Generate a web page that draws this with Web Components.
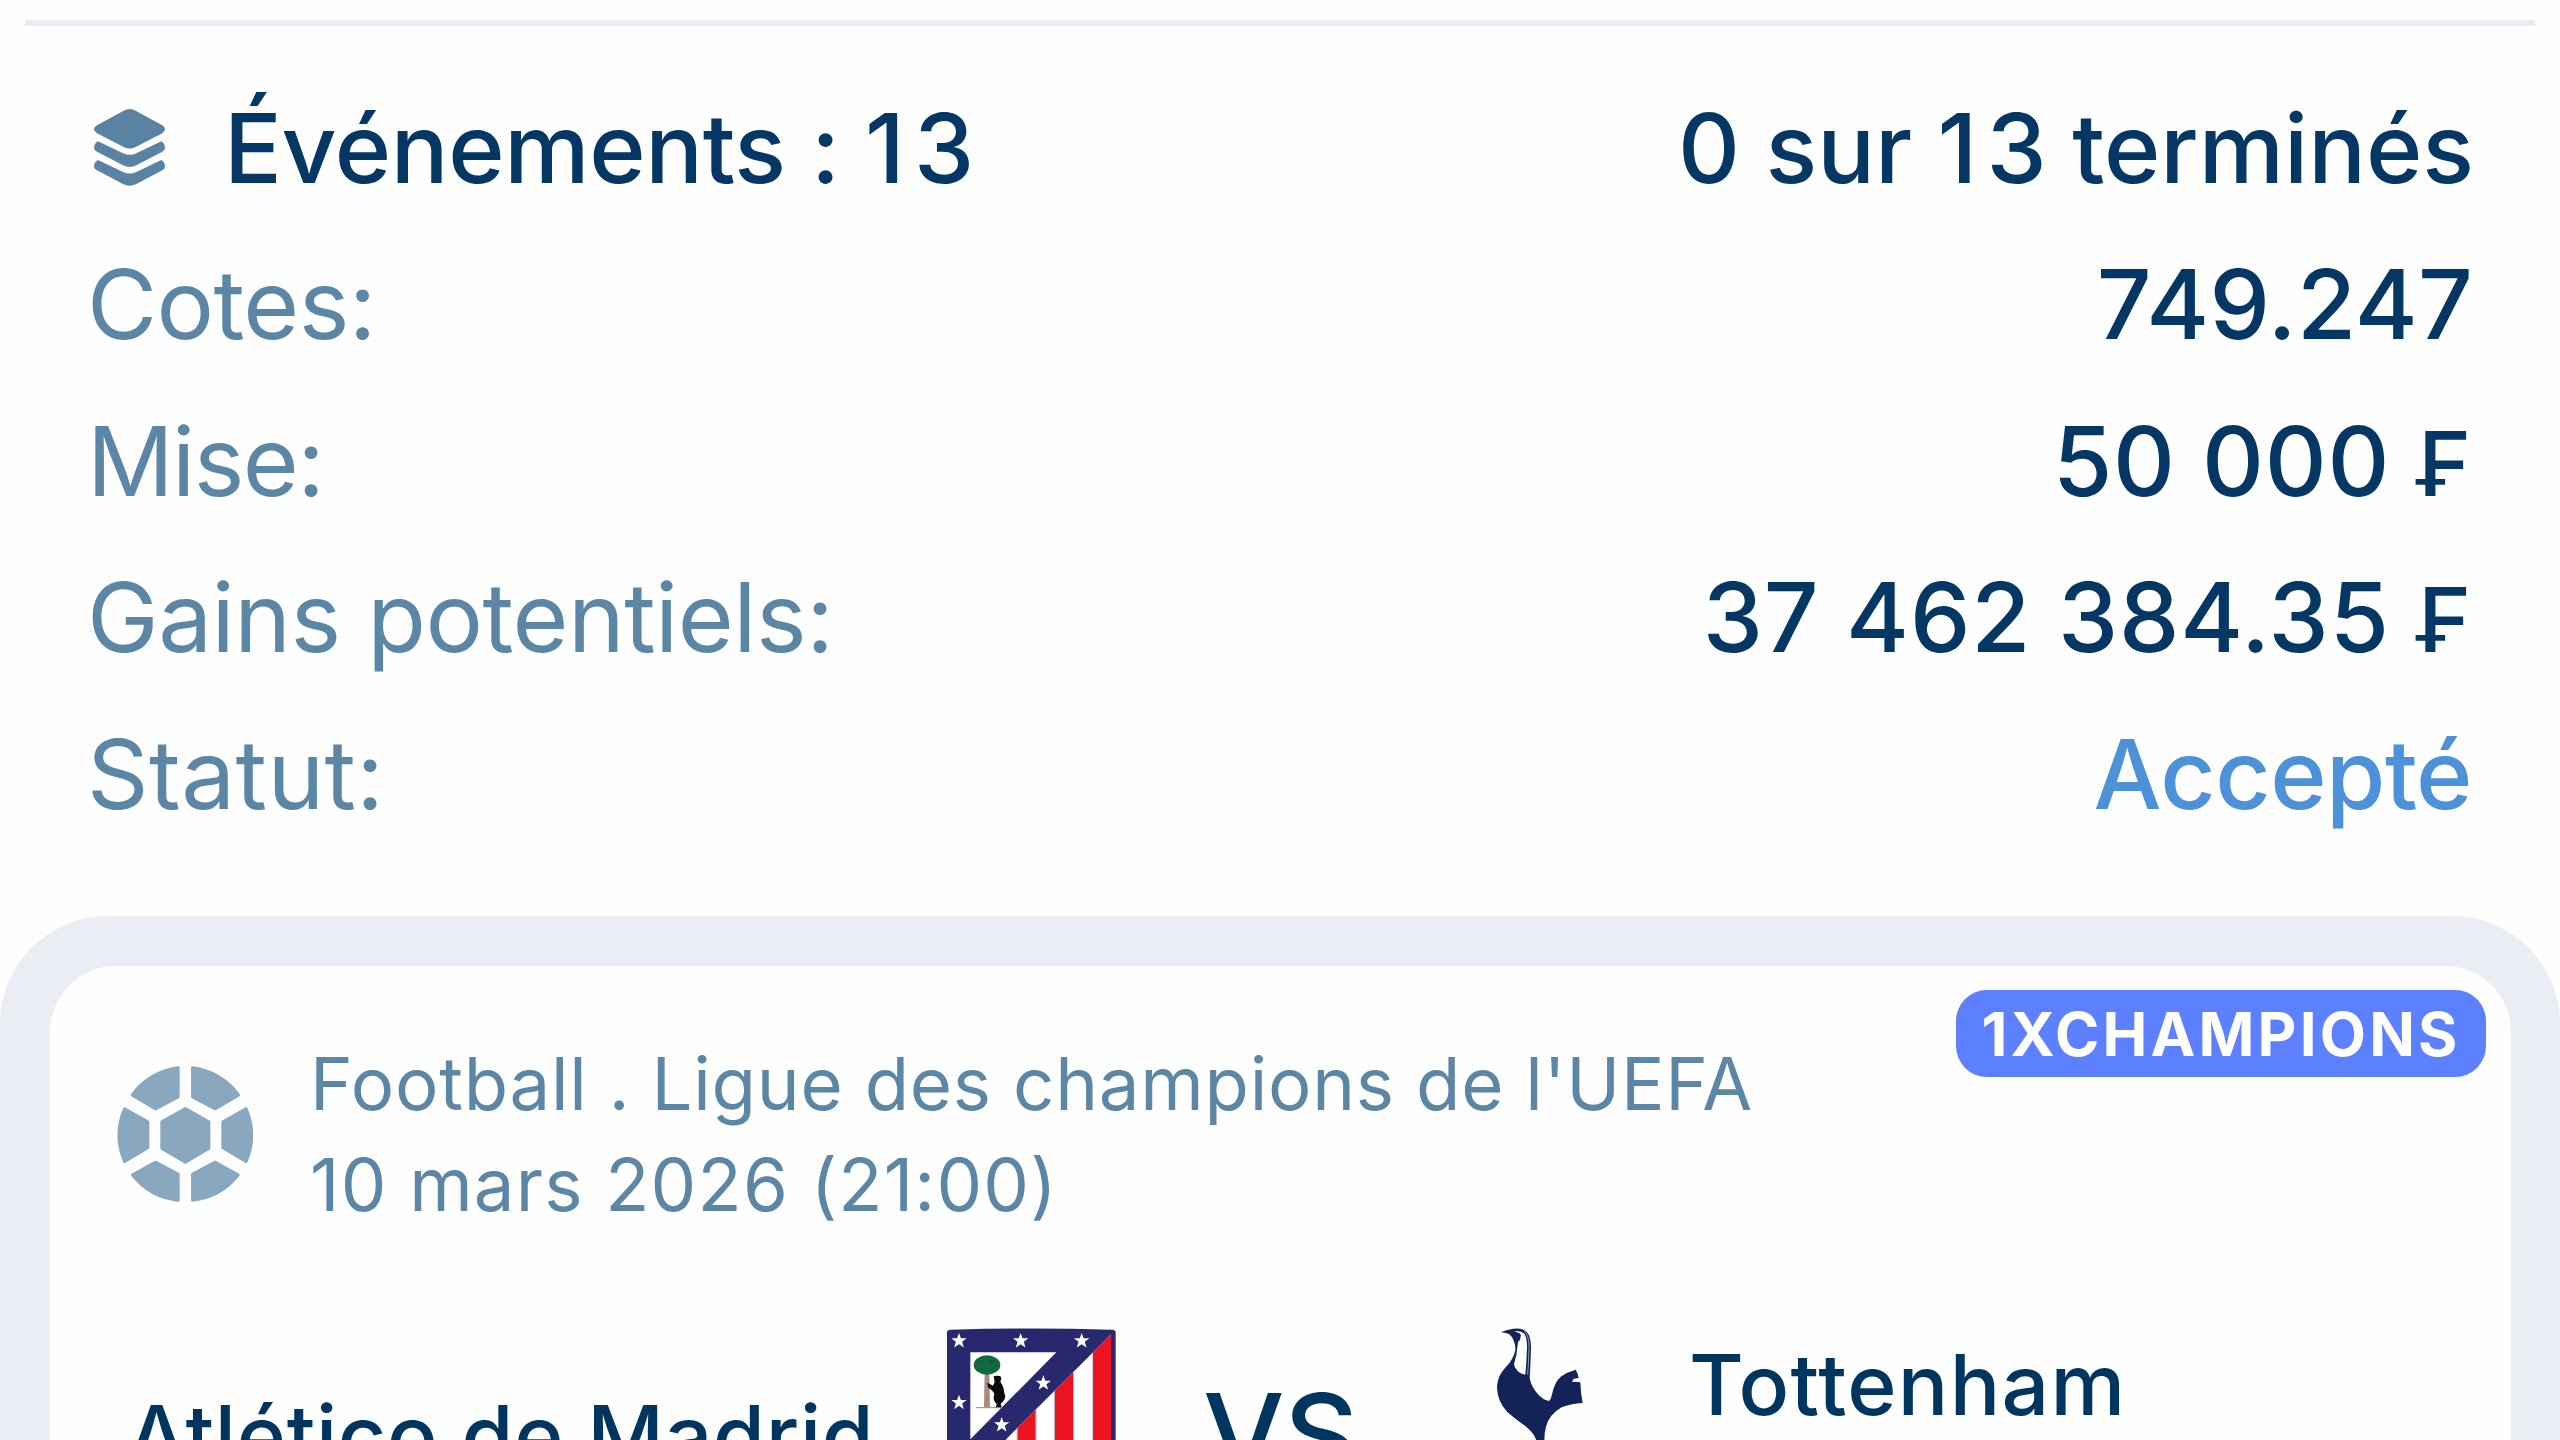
<!DOCTYPE html>
<html lang="fr">
<head>
<meta charset="utf-8">
<title>Coupon</title>
<style>
  html, body {
    margin: 0;
    height: 1440px;
    overflow: hidden;
  }

  body {
    background: #fefefe;
    color: #043764;
    font-family: Inter, "Liberation Sans", sans-serif;
    --muted: #5b86a5;
    --line: #e8ecf4;
    --frame: #eaedf3;
    --accent: #4d92d8;
    --badge: #5c80ff;
  }

  .count {
    letter-spacing: 9px;
    margin-right: -9px;
  }
</style>
</head>
<body>

<bet-slip>
  <slip-row strong style="--ls:-.3px; --vls:0px">
    <layers-icon slot="icon"></layers-icon>
    Événements : <span class="count">13</span>
    <span slot="value">0 sur <span class="count">13</span> terminés</span>
  </slip-row>
  <slip-row style="--ls:-.6px; --vls:.2px; --end:1px">
    Cotes:
    <span slot="value">749.247</span>
  </slip-row>
  <slip-row style="--ls:-1.6px; --vls:.7px; --end:3px">
    Mise:
    <span slot="value">50 000 <franc-sign></franc-sign></span>
  </slip-row>
  <slip-row style="--ls:-.5px; --vls:.9px; --end:3px">
    Gains potentiels:
    <span slot="value">37 462 384.35 <franc-sign></franc-sign></span>
  </slip-row>
  <slip-row accent style="--ls:.4px; --vls:-.5px; --end:2px">
    Statut:
    <span slot="value">Accepté</span>
  </slip-row>

  <match-card slot="events" badge="1XCHAMPIONS">
    <span slot="league">Football . Ligue des champions de l'UEFA</span>
    <span slot="date">10 mars 2026 (21:00)</span>
    <span slot="home">Atlético de Madrid</span>
    <atletico-crest slot="home-logo"></atletico-crest>
    <tottenham-crest slot="away-logo"></tottenham-crest>
    <span slot="away">Tottenham</span>
  </match-card>
</bet-slip>

<script>
class BaseElement extends HTMLElement {
  constructor(){
    super();
    this.attachShadow({ mode:"open" });
  }

  connectedCallback(){
    this.shadowRoot.innerHTML = this.render();
  }
}

class BetSlip extends BaseElement {
  render(){
    return `
      <style>
        :host{
          display:flex;
          flex-direction:column;
          width:2560px;
          height:1440px;
          box-sizing:border-box;
          padding-top:20px;
          overflow:hidden;
        }

        hr{
          flex:none;
          width:2510px;
          height:6px;
          margin:0 auto 43.4px;
          border:0;
          background:var(--line);
        }

        .rows{
          flex:none;
          display:grid;
          grid-auto-rows:156.5px;
          height:847px;
          padding:0 86px 0 87px;
          box-sizing:border-box;
        }
      </style>
      <hr>
      <div class="rows"><slot></slot></div>
      <slot name="events"></slot>
    `;
  }
}

class SlipRow extends BaseElement {
  render(){
    return `
      <style>
        :host{
          display:flex;
          align-items:center;
          justify-content:space-between;
          font-size:96px;
          line-height:156px;
          white-space:nowrap;
        }

        .label{
          display:flex;
          align-items:center;
          color:var(--muted);
          font-weight:420;
          letter-spacing:var(--ls, 0);
        }

        .value{
          font-weight:550;
          letter-spacing:var(--vls, 0);
          padding-right:var(--end, 0);
        }

        :host([strong]) .label{
          color:inherit;
          font-weight:550;
        }

        :host([accent]) .value{
          color:var(--accent);
          font-weight:470;
        }
      </style>
      <div class="label"><slot name="icon"></slot><span><slot></slot></span></div>
      <div class="value"><slot name="value"></slot></div>
    `;
  }
}

class FrancSign extends BaseElement {
  render(){
    return `
      <style>
        :host{
          display:inline;
          font-size:90px;
          line-height:0;
          letter-spacing:0;
        }
      </style>₣`;
  }
}

class LayersIcon extends BaseElement {
  render(){
    return `
      <style>
        :host{
          display:block;
          width:71px;
          height:77px;
          margin:0 59px 0 7px;
        }
        svg{ display:block; width:100%; height:100%; }
      </style>
      <svg viewBox="103 86 213 231" fill="#5a83a3">
        <path d="M192 91Q210 81 228 91L308 135Q316 140 316 147Q316 154 308 159L228 200Q210 209 192 200L112 159Q103 154 103 147Q103 140 112 135Z"/>
        <path d="M103 203Q103 190 115 183L190 219Q210 228 230 219L305 183Q316 190 316 203Q316 209 308 214L230 255Q210 265 190 255L112 214Q103 209 103 203Z"/>
        <path d="M103 259Q103 246 115 239L190 275Q210 284 230 275L305 239Q316 246 316 259Q316 265 308 270L230 311Q210 321 190 311L112 270Q103 265 103 259Z"/>
      </svg>
    `;
  }
}

class BallIcon extends BaseElement {
  render(){
    // left half is drawn once and mirrored
    return `
      <style>
        :host{
          display:block;
          flex:none;
          width:137px;
          height:136px;
        }
        svg{ display:block; width:100%; height:100%; }
      </style>
      <svg viewBox="81 80 411 408" fill="#89a7be" stroke="#89a7be" stroke-width="10" stroke-linejoin="round">
        <defs>
          <g id="half">
            <path d="M264 86V172L196 208L127 167A200 200 0 0 1 264 86Z"/>
            <path d="M104 209L173 248V325L104 366A200 200 0 0 1 104 209Z"/>
            <path d="M264 482V405L196 369L128 407A200 200 0 0 0 264 482Z"/>
          </g>
        </defs>
        <path d="M286 208L356 248V327L286 368L216 327V248Z"/>
        <use href="#half"/>
        <use href="#half" transform="translate(572) scale(-1 1)"/>
      </svg>
    `;
  }
}

class EventBadge extends BaseElement {
  render(){
    return `
      <style>
        :host{
          display:block;
          box-sizing:border-box;
          width:530px;
          height:87px;
          padding-left:26px;
          border-radius:31px;
          background:var(--badge);
          color:#fff;
          font-size:60px;
          font-weight:670;
          line-height:89px;
          letter-spacing:3.2px;
          white-space:nowrap;
        }
      </style>
      <slot></slot>
    `;
  }
}

class MatchCard extends BaseElement {
  render(){
    return `
      <style>
        :host{
          display:block;
          flex:none;
          height:700px;
          box-sizing:border-box;
          padding:49.5px 49.5px 0;
          border-radius:108px 108px 0 0;
          background:var(--frame);
        }

        .card{
          position:relative;
          height:100%;
          box-sizing:border-box;
          padding-top:67.5px;
          border-radius:66px 66px 0 0;
          background:#fefefe;
        }

        event-badge{
          position:absolute;
          top:24.5px;
          right:25px;
        }

        header{
          display:flex;
          align-items:center;
          gap:56px;
          height:202px;
          padding-left:67.5px;
          color:var(--muted);
          font-size:72.5px;
          line-height:101px;
          white-space:nowrap;
        }

        .league{ letter-spacing:.76px; }
        .date{ letter-spacing:1.18px; }

        .teams{
          display:grid;
          grid-template-columns:820px 256px 294px 192px 1fr;
          align-items:center;
          height:214px;
          margin-top:93px;
          padding-left:77.5px;
          color:#00355f;
          font-size:84px;
          font-weight:550;
          line-height:101.6px;
          white-space:nowrap;
        }

        .home{ letter-spacing:.7px; }

        /* room for a second line of the name */
        .away{
          min-height:203px;
          letter-spacing:1.3px;
        }

        .vs{
          font-size:115px;
          letter-spacing:-.6px;
        }
      </style>
      <div class="card">
        <event-badge>${this.getAttribute("badge")}</event-badge>
        <header>
          <ball-icon></ball-icon>
          <div>
            <div class="league"><slot name="league"></slot></div>
            <div class="date"><slot name="date"></slot></div>
          </div>
        </header>
        <div class="teams">
          <div class="home"><slot name="home"></slot></div>
          <slot name="home-logo"></slot>
          <div class="vs">VS</div>
          <slot name="away-logo"></slot>
          <div class="away"><slot name="away"></slot></div>
        </div>
      </div>
    `;
  }
}

class AtleticoCrest extends BaseElement {
  render(){
    const stars = [[118,123],[303,123],[486,123],[371,250],[118,308],[246,375]];
    return `
      <style>
        :host{ display:block; width:169px; height:214px; }
        svg{ display:block; width:100%; height:100%; }
      </style>
      <svg viewBox="82 84 507 642" preserveAspectRatio="xMinYMin slice">
        <defs>
          <path id="star" fill="#fff" d="M0-24L5.8-8H23L9.4 2.6L14.4 19.5L0 9.5L-14.4 19.5L-9.4 2.6L-23-8H-5.8Z"/>
          <clipPath id="field"><path d="M575 102V640L258 700V419Z"/></clipPath>
        </defs>
        <path fill="#28286e" d="M82 97Q82 90 92 89Q335 82 578 89Q588 90 588 97V560Q588 650 335 722Q82 650 82 560Z"/>
        <path fill="#fff" d="M152 157H410L152 418Z"/>
        <g clip-path="url(#field)">
          <path fill="#fff" d="M250 100H575V720H250Z"/>
          <path fill="#ec1420" d="M520 100H575V720H520ZM405 100H460V720H405ZM293 100H348V720H293Z"/>
          <path stroke="#b9b2d8" stroke-width="2.5" d="M519 100V720M461.5 100V720M404 100V720M349.5 100V720M292 100V720"/>
        </g>
        <path fill="#a98a7c" d="M195 215H209L211 322H193Z"/>
        <path stroke="#9a8d80" stroke-width="3" d="M168 323H246"/>
        <ellipse cx="202" cy="195" rx="40" ry="29" fill="#0f6b3f"/>
        <path fill="#165231" d="M174 186l18-5-6 10zM204 184l20-4-8 14zM186 203l12 8-18-2zM210 206l14-7-4 12z" opacity=".6"/>
        <path fill="#0b0b10" d="M222 229L230 227L242 228L245 236L242 245Q253 260 254 280Q260 292 252 302L243 312L246 322H229L231 312Q221 303 222 291L224 281L218 272L205 262L203 249L209 251L220 257L225 246Z"/>
        ${stars.map(([x,y]) => `<use href="#star" x="${x}" y="${y}"/>`).join("")}
      </svg>
    `;
  }
}

class TottenhamCrest extends BaseElement {
  render(){
    return `
      <style>
        :host{ display:block; width:86px; height:214px; }
        svg{ display:block; width:100%; height:100%; }
      </style>
      <svg viewBox="111 84 258 642" preserveAspectRatio="xMinYMin slice">
        <path fill="#132257" d="M123 96Q142 88 160 86Q188 82 201 97Q212 109 213 140Q212 190 209 234Q214 262 236 285Q252 301 267 303Q273 299 275 287Q283 246 304 229Q322 216 347 209Q355 222 356 234L341 236L336 245L361 247Q362 280 368 309Q330 311 305 322Q268 343 258 380Q253 398 253 420V560H228V418Q222 400 196 378Q160 352 141 335Q112 305 111 262Q112 236 124 218Q134 204 149 188Q163 168 166 150Q167 134 160 120Q155 108 147 102Q138 99 123 96Z"/>
        <path fill="#fefefe" d="M163 94Q183 91 193 101Q201 112 201 142Q200 185 196 224Q181 222 171 211Q163 203 162 192Q171 166 172 142L174 126Q183 120 181 111Q186 107 178 100Q172 97 163 94Z"/>
        <path fill="none" stroke="#aab2cf" stroke-width="2.5" d="M194 93Q207 108 207 142Q206 185 203 224"/>
      </svg>
    `;
  }
}

customElements.define("bet-slip", BetSlip);
customElements.define("slip-row", SlipRow);
customElements.define("franc-sign", FrancSign);
customElements.define("layers-icon", LayersIcon);
customElements.define("ball-icon", BallIcon);
customElements.define("event-badge", EventBadge);
customElements.define("match-card", MatchCard);
customElements.define("atletico-crest", AtleticoCrest);
customElements.define("tottenham-crest", TottenhamCrest);
</script>
</body>
</html>
